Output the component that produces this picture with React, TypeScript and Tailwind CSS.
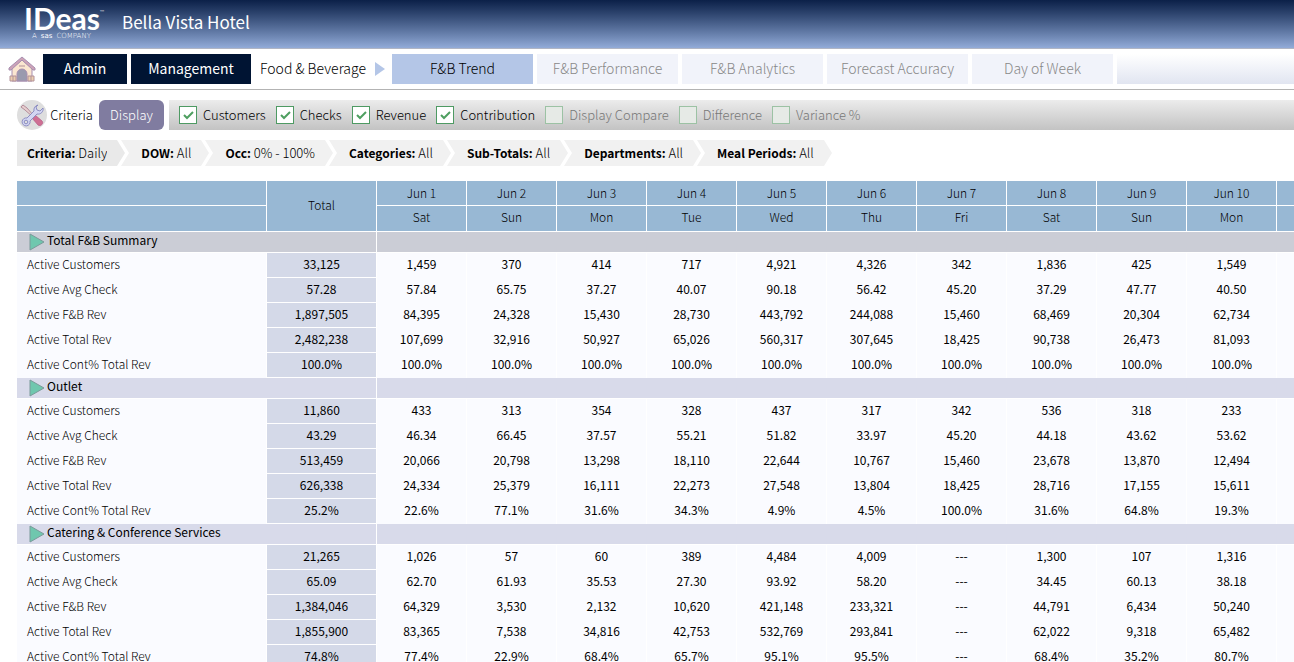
import { useState } from "react";

const HOUSE_OUTLINE = "#a88fb0";

const dates = [
  ["Jun 1", "Sat"],
  ["Jun 2", "Sun"],
  ["Jun 3", "Mon"],
  ["Jun 4", "Tue"],
  ["Jun 5", "Wed"],
  ["Jun 6", "Thu"],
  ["Jun 7", "Fri"],
  ["Jun 8", "Sat"],
  ["Jun 9", "Sun"],
  ["Jun 10", "Mon"],
];

interface Section {
  title: string;
  summary?: boolean;
  rows: { label: string; total: string; values: string[] }[];
}

const sections: Section[] = [
  {
    title: "Total F&B Summary",
    summary: true,
    rows: [
      { label: "Active Customers", total: "33,125", values: ["1,459", "370", "414", "717", "4,921", "4,326", "342", "1,836", "425", "1,549"] },
      { label: "Active Avg Check", total: "57.28", values: ["57.84", "65.75", "37.27", "40.07", "90.18", "56.42", "45.20", "37.29", "47.77", "40.50"] },
      { label: "Active F&B Rev", total: "1,897,505", values: ["84,395", "24,328", "15,430", "28,730", "443,792", "244,088", "15,460", "68,469", "20,304", "62,734"] },
      { label: "Active Total Rev", total: "2,482,238", values: ["107,699", "32,916", "50,927", "65,026", "560,317", "307,645", "18,425", "90,738", "26,473", "81,093"] },
      { label: "Active Cont% Total Rev", total: "100.0%", values: ["100.0%", "100.0%", "100.0%", "100.0%", "100.0%", "100.0%", "100.0%", "100.0%", "100.0%", "100.0%"] },
    ],
  },
  {
    title: "Outlet",
    rows: [
      { label: "Active Customers", total: "11,860", values: ["433", "313", "354", "328", "437", "317", "342", "536", "318", "233"] },
      { label: "Active Avg Check", total: "43.29", values: ["46.34", "66.45", "37.57", "55.21", "51.82", "33.97", "45.20", "44.18", "43.62", "53.62"] },
      { label: "Active F&B Rev", total: "513,459", values: ["20,066", "20,798", "13,298", "18,110", "22,644", "10,767", "15,460", "23,678", "13,870", "12,494"] },
      { label: "Active Total Rev", total: "626,338", values: ["24,334", "25,379", "16,111", "22,273", "27,548", "13,804", "18,425", "28,716", "17,155", "15,611"] },
      { label: "Active Cont% Total Rev", total: "25.2%", values: ["22.6%", "77.1%", "31.6%", "34.3%", "4.9%", "4.5%", "100.0%", "31.6%", "64.8%", "19.3%"] },
    ],
  },
  {
    title: "Catering & Conference Services",
    rows: [
      { label: "Active Customers", total: "21,265", values: ["1,026", "57", "60", "389", "4,484", "4,009", "---", "1,300", "107", "1,316"] },
      { label: "Active Avg Check", total: "65.09", values: ["62.70", "61.93", "35.53", "27.30", "93.92", "58.20", "---", "34.45", "60.13", "38.18"] },
      { label: "Active F&B Rev", total: "1,384,046", values: ["64,329", "3,530", "2,132", "10,620", "421,148", "233,321", "---", "44,791", "6,434", "50,240"] },
      { label: "Active Total Rev", total: "1,855,900", values: ["83,365", "7,538", "34,816", "42,753", "532,769", "293,841", "---", "62,022", "9,318", "65,482"] },
      { label: "Active Cont% Total Rev", total: "74.8%", values: ["77.4%", "22.9%", "68.4%", "65.7%", "95.1%", "95.5%", "---", "68.4%", "35.2%", "80.7%"] },
    ],
  },
];

const tabs = ["F&B Trend", "F&B Performance", "F&B Analytics", "Forecast Accuracy", "Day of Week"];

const displayOptions = [
  { label: "Customers", on: true },
  { label: "Checks", on: true },
  { label: "Revenue", on: true },
  { label: "Contribution", on: true },
  { label: "Display Compare", on: false },
  { label: "Difference", on: false },
  { label: "Variance %", on: false },
];

const criteria = [
  ["Criteria:", "Daily"],
  ["DOW:", "All"],
  ["Occ:", "0% - 100%"],
  ["Categories:", "All"],
  ["Sub-Totals:", "All"],
  ["Departments:", "All"],
  ["Meal Periods:", "All"],
];

function Logo() {
  return (
    <div className="w-[84px] font-['Lato',sans-serif] whitespace-nowrap text-white">
      <div className="flex items-start">
        <span className="text-[30px] leading-6 font-bold">IDeas</span>
        <span className="text-[6px] leading-3">™</span>
      </div>
      <div className="flex items-center gap-1 pl-2 font-['DejaVu_Sans',sans-serif] text-[7px] leading-3">
        <span>A</span>
        <b>sas</b>
        <span>COMPANY</span>
      </div>
    </div>
  );
}

function HouseIcon() {
  return (
    <svg viewBox="0 0 28 26" className="h-[26px] w-7">
      <path d="M4 12 14 4l10 8v13H4z" fill="#fbe6d0" stroke={HOUSE_OUTLINE} />
      <path d="M1 12 14 1l13 11v2h-2L14 4 3 14H1z" fill="#cda3b8" stroke={HOUSE_OUTLINE} />
      <path d="M9 25v-7a5 5 0 0 1 10 0v7z" fill="#9a9aae" stroke={HOUSE_OUTLINE} />
      <path d="M2 20h6v5H2zM20 20h6v5h-6z" fill="#eccfae" stroke="#b3929a" />
      <path d="M5 20v5M23 20v5M11 10h6" stroke="#b3929a" />
    </svg>
  );
}

function ToolsIcon() {
  return (
    <svg viewBox="0 0 30 30" className="h-[30px] w-[30px]">
      <circle cx="15" cy="15" r="15" fill="#dedede" />
      <path d="m4 7 2-2 4 3 7 8-1 1-8-7z" fill="#e6cfcf" stroke="#a8788a" strokeWidth=".8" />
      <path d="m15 18 3-3 7 6c2 2-1 6-4 4z" fill="#cf6f93" stroke="#b85f88" strokeWidth=".8" />
      <path d="M21 5a5 5 0 0 0-4 6l-7 7a4 4 0 1 0 3 3l7-7a5 5 0 0 0 6-6l-3 3-3-1-1-3z" fill="#d3d6f2" stroke="#8586bd" strokeWidth=".9" />
      <circle cx="9" cy="22" r="1.8" fill="#dedede" stroke="#8586bd" strokeWidth=".9" />
    </svg>
  );
}

export default function App() {
  const [activeTab, setActiveTab] = useState("F&B Trend");
  const [options, setOptions] = useState(displayOptions);

  const toggle = (label: string) =>
    setOptions(options.map((o) => (o.label === label ? { ...o, on: !o.on } : o)));

  return (
    <div className="h-screen overflow-hidden bg-white font-['Noto_Sans_CJK_SC',sans-serif] text-[13px] font-light text-black">
      {/* Header */}
      <header className="flex h-[49px] gap-[14px] border-b border-[#b0b5c4] bg-linear-to-b from-[#0b2048] to-[#92abd8] pt-1.5 pl-6">
        <Logo />
        <h1 className="text-[17px] leading-8 font-normal text-white">Bella Vista Hotel</h1>
      </header>

      {/* Main navigation */}
      <nav className="flex h-[41px] items-center gap-1 border-b border-[#b3b3b3] pl-2 text-sm">
        <button aria-label="Home" className="mr-[3px]">
          <HouseIcon />
        </button>
        <button className="h-[30px] w-[84px] bg-[#001433] pb-0.5 font-normal text-white">Admin</button>
        <button className="h-[30px] w-[120px] bg-[#001433] pb-0.5 font-normal text-white">Management</button>
        <div className="flex h-[30px] w-[133px] shrink-0 items-center justify-between pr-[3px] pl-[5px]">
          <span className="pb-0.5 whitespace-nowrap">Food &amp; Beverage</span>
          <svg viewBox="0 0 10 14" className="h-[14px] w-[10px]">
            <path d="M0 0 10 7 0 14z" fill="#b4c6e7" />
          </svg>
        </div>
        {tabs.map((tab) => (
          <button
            key={tab}
            onClick={() => setActiveTab(tab)}
            className={`h-[30px] w-[141px] shrink-0 pb-0.5 ${
              tab === activeTab ? "bg-[#b4c6e7] text-black" : "bg-[#f1f3fa] text-[#888888]"
            }`}
          >
            {tab}
          </button>
        ))}
        <div className="h-[30px] flex-1 bg-linear-to-b from-white to-[#e1e5f1]" />
      </nav>

      {/* Display options */}
      <div className="flex items-center pt-[10px] pl-[17px]">
        <ToolsIcon />
        <button className="ml-[3px] w-[43px]">Criteria</button>
        <button className="ml-1.5 h-[30px] w-[65px] rounded-md bg-[#807ca0] text-white">Display</button>
        <div className="ml-[5px] flex h-[30px] flex-1 items-center gap-[10px] bg-linear-to-b from-[#ececec] to-[#c3c3c3] pl-[10px]">
          {options.map((option) => (
            <label
              key={option.label}
              className={`flex items-center gap-1.5 whitespace-nowrap ${option.on ? "" : "text-[#777777]"}`}
            >
              <span className="relative flex h-[18px] w-[18px]">
                <input
                  type="checkbox"
                  checked={option.on}
                  onChange={() => toggle(option.label)}
                  className={`h-[18px] w-[18px] appearance-none border ${
                    option.on ? "border-[#4e9a63] bg-white" : "border-[#9cc2a4] bg-[#e6eae6]"
                  }`}
                />
                {option.on && (
                  <svg viewBox="0 0 18 18" className="pointer-events-none absolute inset-0">
                    <path d="m5 9 3 3 6-6" fill="none" stroke="#4e9f60" strokeWidth="2" />
                  </svg>
                )}
              </span>
              {option.label}
            </label>
          ))}
        </div>
      </div>

      {/* Selected criteria */}
      <ul className="flex pt-[10px] pl-[17px] text-[13px]">
        {criteria.map(([name, value], i) => (
          <li key={name} className="flex h-[26px] whitespace-nowrap leading-[26px]">
            <span className={`pl-[10px] ${i === 0 ? "bg-[#e9e9e9]" : "bg-[#f1f1f1]"}`}>
              <b className="text-xs leading-[26px] font-bold">{name}</b> {value}
            </span>
            <svg viewBox="0 0 24 26" className="h-[26px] w-6">
              <path d="M14 0h10v26H14l8-13z" fill={i < criteria.length - 1 ? "#f1f1f1" : "#ffffff"} />
              <path d="M0 0h10l8 13-8 13H0z" fill={i === 0 ? "#e9e9e9" : "#f1f1f1"} />
            </svg>
          </li>
        ))}
      </ul>

      {/* Trend table */}
      <div className="overflow-hidden pt-[15px] pl-[17px]">
        <table className="w-[1350px] table-fixed border-separate border-spacing-0 text-center text-xs">
          <colgroup>
            <col className="w-[250px]" />
            <col className="w-[110px]" />
            {dates.map(([date]) => (
              <col key={date} className="w-[90px]" />
            ))}
            <col className="w-[90px]" />
          </colgroup>
          <thead className="bg-[#98b8d4]">
            <tr className="h-[25px]">
              <th className="border-r border-b border-white p-0" />
              <th rowSpan={2} className="border-r border-b border-white p-0 pb-0.5 font-light">Total</th>
              {dates.map(([date]) => (
                <th key={date} className="border-r border-b border-white p-0 font-light">{date}</th>
              ))}
              <th className="border-r border-b border-white p-0" />
            </tr>
            <tr className="h-[26px]">
              <th className="border-r border-b border-white p-0" />
              {dates.map(([date, day]) => (
                <th key={date} className="border-r border-b border-white p-0 pb-[3px] font-light">{day}</th>
              ))}
              <th className="border-r border-b border-white p-0" />
            </tr>
          </thead>
          {sections.map((section) => (
            <tbody key={section.title}>
              <tr className={`h-[21px] ${section.summary ? "bg-[#cbcdd6]" : "bg-[#d8daea]"}`}>
                <th colSpan={2} className="border-r border-b border-white p-0 pl-3">
                  <button className="flex h-5 items-center gap-0.5 font-normal">
                    <svg viewBox="0 0 16 18" className="h-[18px] w-4">
                      <path d="M1 1 15 9 1 17z" fill="#6fc7ae" stroke="#7b9a9a" />
                    </svg>
                    <span className="pb-1 leading-4">{section.title}</span>
                  </button>
                </th>
                <td colSpan={11} className="border-b border-white p-0" />
              </tr>
              {section.rows.map((row) => (
                <tr key={row.label} className="h-[25px] bg-[#fafbff]">
                  <th className="border-r border-white p-0 pb-[3px] pl-[10px] text-left font-light">{row.label}</th>
                  <td className="border-r border-b border-white bg-[#d4d9e8] p-0 pb-0.5 font-normal">{row.total}</td>
                  {row.values.map((value, i) => (
                    <td key={i} className="border-r border-white p-0 pb-[3px] font-normal">{value}</td>
                  ))}
                  <td className="p-0" />
                </tr>
              ))}
            </tbody>
          ))}
        </table>
      </div>
    </div>
  );
}
